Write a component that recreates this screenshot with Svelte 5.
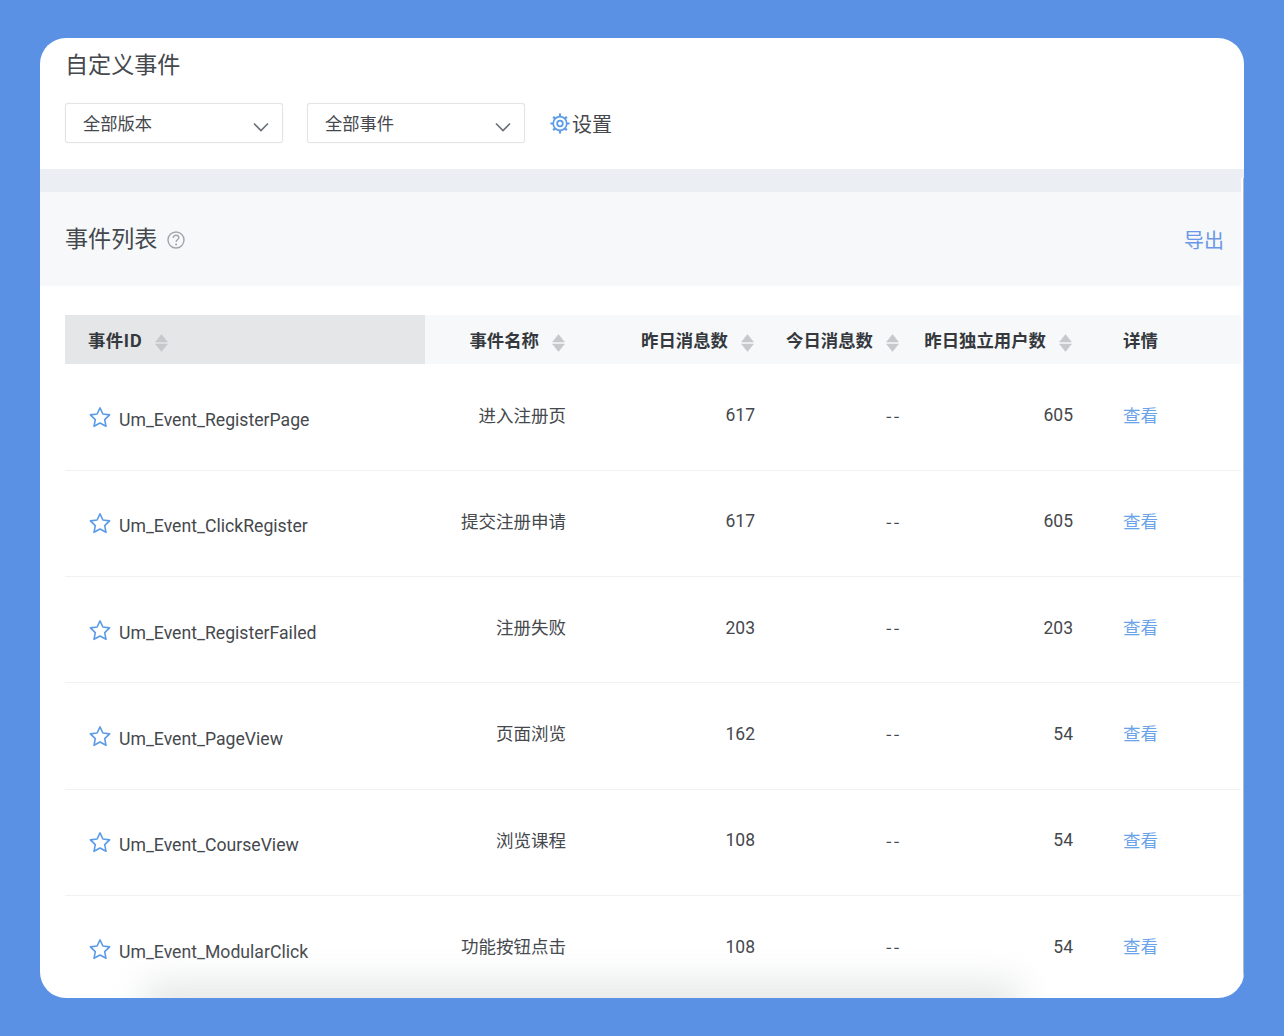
<script>
  const rows = [
    ['Um_Event_RegisterPage', '进入注册页', '617', '--', '605'],
    ['Um_Event_ClickRegister', '提交注册申请', '617', '--', '605'],
    ['Um_Event_RegisterFailed', '注册失败', '203', '--', '203'],
    ['Um_Event_PageView', '页面浏览', '162', '--', '54'],
    ['Um_Event_CourseView', '浏览课程', '108', '--', '54'],
    ['Um_Event_ModularClick', '功能按钮点击', '108', '--', '54']
  ];
  const heads = [
    { t: '事件名称', c: 'name' },
    { t: '昨日消息数', c: 'num' },
    { t: '今日消息数', c: 'today' },
    { t: '昨日独立用户数', c: 'users' }
  ];
  const selects = ['全部版本', '全部事件'];
</script>

{#snippet sort()}
  <svg class="sort" viewBox="0 0 13 18" width="13" height="18" aria-hidden="true">
    <path d="M6.5 0.5 L12.5 8 H0.5 Z" fill="#c6c8cb" stroke="#c6c8cb" stroke-width="0.5" stroke-linejoin="round" />
    <path d="M0.5 10 H12.5 L6.5 17.5 Z" fill="#c6c8cb" stroke="#c6c8cb" stroke-width="0.5" stroke-linejoin="round" />
  </svg>
{/snippet}

<div class="page">
  <main class="card">
    <header class="top">
      <h1>自定义事件</h1>
      <div class="filters">
        {#each selects as s}
          <div class="select">
            <span>{s}</span>
            <svg width="16" height="10" viewBox="0 0 16 10" aria-hidden="true">
              <path d="M1 1.5 L8 8.5 L15 1.5" fill="none" stroke="#6d7279" stroke-width="1.7" />
            </svg>
          </div>
        {/each}
        <div class="settings">
          <svg width="20" height="21" viewBox="0 0 20 21" aria-hidden="true">
            <g stroke="#5b9be8" fill="none">
              <circle cx="10" cy="10.5" r="6.8" stroke-width="1.7" />
              <circle cx="10" cy="10.5" r="2.8" stroke-width="1.8" />
              <path stroke-width="2.2" d="M10 .6v2.6M10 17.8v2.6M.4 10.5H3M17 10.5h2.6M3.2 3.7l1.9 1.9M14.9 15.4l1.9 1.9M16.8 3.7l-1.9 1.9M5.1 15.4l-1.9 1.9" />
            </g>
          </svg>
          <span>设置</span>
        </div>
      </div>
    </header>

    <div class="band"></div>

    <section class="list-head">
      <div class="list-title">
        <h2>事件列表</h2>
        <svg width="18" height="18" viewBox="0 0 18 18" aria-hidden="true">
          <circle cx="9" cy="9" r="8" fill="none" stroke="#a3a5a8" stroke-width="1.4" />
          <path d="M6.2 7c0-1.6 1.2-2.7 2.8-2.7s2.8 1.1 2.8 2.4c0 2-2.7 2.2-2.7 4.2" fill="none" stroke="#a3a5a8" stroke-width="1.4" />
          <circle cx="9.1" cy="13.4" r="1" fill="#a3a5a8" />
        </svg>
      </div>
      <span class="export">导出</span>
    </section>

    <div class="table">
      <div class="row head">
        <div class="cell id active"><span>事件ID</span>{@render sort()}</div>
        {#each heads as h}
          <div class="cell {h.c}"><span>{h.t}</span>{@render sort()}</div>
        {/each}
        <div class="cell detail"><span>详情</span></div>
      </div>
      {#each rows as r}
        <div class="row body">
          <div class="cell id">
            <svg width="22" height="22" viewBox="0 0 22 21" aria-hidden="true">
              <path d="M11 1.4 L13.9 7.5 L20.6 8.4 L15.7 13.1 L17 19.8 L11 16.5 L5 19.8 L6.3 13.1 L1.4 8.4 L8.1 7.5 Z" fill="none" stroke="#5b9be8" stroke-width="1.6" stroke-linejoin="round" />
            </svg>
            <span class="event">{r[0]}</span>
          </div>
          <div class="cell name"><span>{r[1]}</span></div>
          <div class="cell num">{r[2]}</div>
          <div class="cell today"><span>{r[3]}</span></div>
          <div class="cell users">{r[4]}</div>
          <div class="cell detail"><span class="link">查看</span></div>
        </div>
      {/each}
    </div>

    <div class="edge"></div>
    <div class="shade"></div>
  </main>
</div>

<style>
  :global(body) {
    margin: 0;
    background: #5b91e5;
  }
  .page {
    box-sizing: border-box;
    width: 1284px;
    height: 1036px;
    padding: 38px 40px;
    font-family: Roboto, "Noto Sans CJK SC", sans-serif;
    color: #45484d;
  }
  .card {
    position: relative;
    height: 960px;
    background: #fff;
    border-radius: 26px;
    overflow: hidden;
  }
  .top {
    height: 131px;
    padding: 13px 0 0 25px;
    box-sizing: border-box;
  }
  h1, h2 {
    margin: 0;
    font-size: 23.1px;
    line-height: 30px;
    font-weight: 400;
    color: #45484d;
  }
  .filters {
    display: flex;
    align-items: center;
    margin-top: 22px;
  }
  .select {
    box-sizing: border-box;
    width: 218px;
    height: 40px;
    margin-right: 24px;
    padding: 0 13px 2px 17px;
    display: flex;
    align-items: center;
    justify-content: space-between;
    background: #fff;
    border: 1px solid #e2e4e7;
    border-radius: 3px;
    box-shadow: 0 0 1px #dfe1e4;
    font-size: 17.3px;
  }
  .select svg {
    margin-top: 9px;
  }
  .settings {
    display: flex;
    align-items: center;
    font-size: 20px;
    margin-left: 1px;
  }
  .settings span {
    margin-left: 2px;
  }
  .band {
    height: 23px;
    background: #ebeef2;
  }
  .list-head {
    box-sizing: border-box;
    height: 94px;
    margin-right: 3px;
    padding: 0 17px 0 25px;
    display: flex;
    align-items: center;
    justify-content: space-between;
    background: #f6f8fa;
  }
  .list-title {
    display: flex;
    align-items: center;
    gap: 10px;
    padding-top: 2px;
  }
  .export {
    font-size: 20px;
    color: #6a97e6;
  }
  .table {
    margin: 29px 3px 0 25px;
  }
  .row {
    display: grid;
    grid-template-columns: 360px 165px 189px 145px 173px 1fr;
  }
  .head {
    height: 49.4px;
    background: #f6f8fa;
    font-size: 17.4px;
    font-weight: 700;
    color: #35383d;
    font-family: "Noto Sans CJK SC", sans-serif;
  }
  .body {
    box-sizing: border-box;
    height: 106.3px;
    border-bottom: 1px solid #f0f1f3;
    font-size: 17.5px;
  }
  .cell {
    display: flex;
    align-items: center;
    justify-content: flex-end;
    padding-right: 24px;
    min-width: 0;
  }
  .body .cell {
    padding-bottom: 4px;
  }
  .body .cell.name span, .link, .body .today span {
    position: relative;
    top: -1px;
  }
  .body .today {
    font-family: "Noto Sans CJK SC", sans-serif;
    letter-spacing: 1.5px;
    padding-right: 23px;
  }
  .head .cell {
    padding-right: 25px;
  }
  .head .cell .sort {
    margin-left: 13px;
    margin-top: 6px;
  }
  .head .cell.id {
    justify-content: flex-start;
    padding-left: 23px;
    background: #e4e6e8;
  }
  .head .cell.id span {
    letter-spacing: 0.3px;
  }
  .body .cell.id {
    justify-content: flex-start;
    padding: 0 0 0 24px;
    gap: 8px;
  }
  .event {
    font-size: 17.65px;
    position: relative;
    top: 3px;
  }
  .head .cell.detail, .body .cell.detail {
    justify-content: flex-start;
    padding-left: 26px;
    padding-right: 0;
  }
  .link {
    color: #6ba3ea;
  }
  .edge {
    position: absolute;
    top: 140px;
    right: 0;
    bottom: 0;
    box-sizing: border-box;
    width: 3px;
    background: #fff;
    border-right: 1px solid #b4b9c0;
  }
  .shade {
    position: absolute;
    left: 105px;
    right: 225px;
    bottom: -26px;
    height: 40px;
    background: #e2e4e4;
    filter: blur(18px);
    pointer-events: none;
  }
</style>
